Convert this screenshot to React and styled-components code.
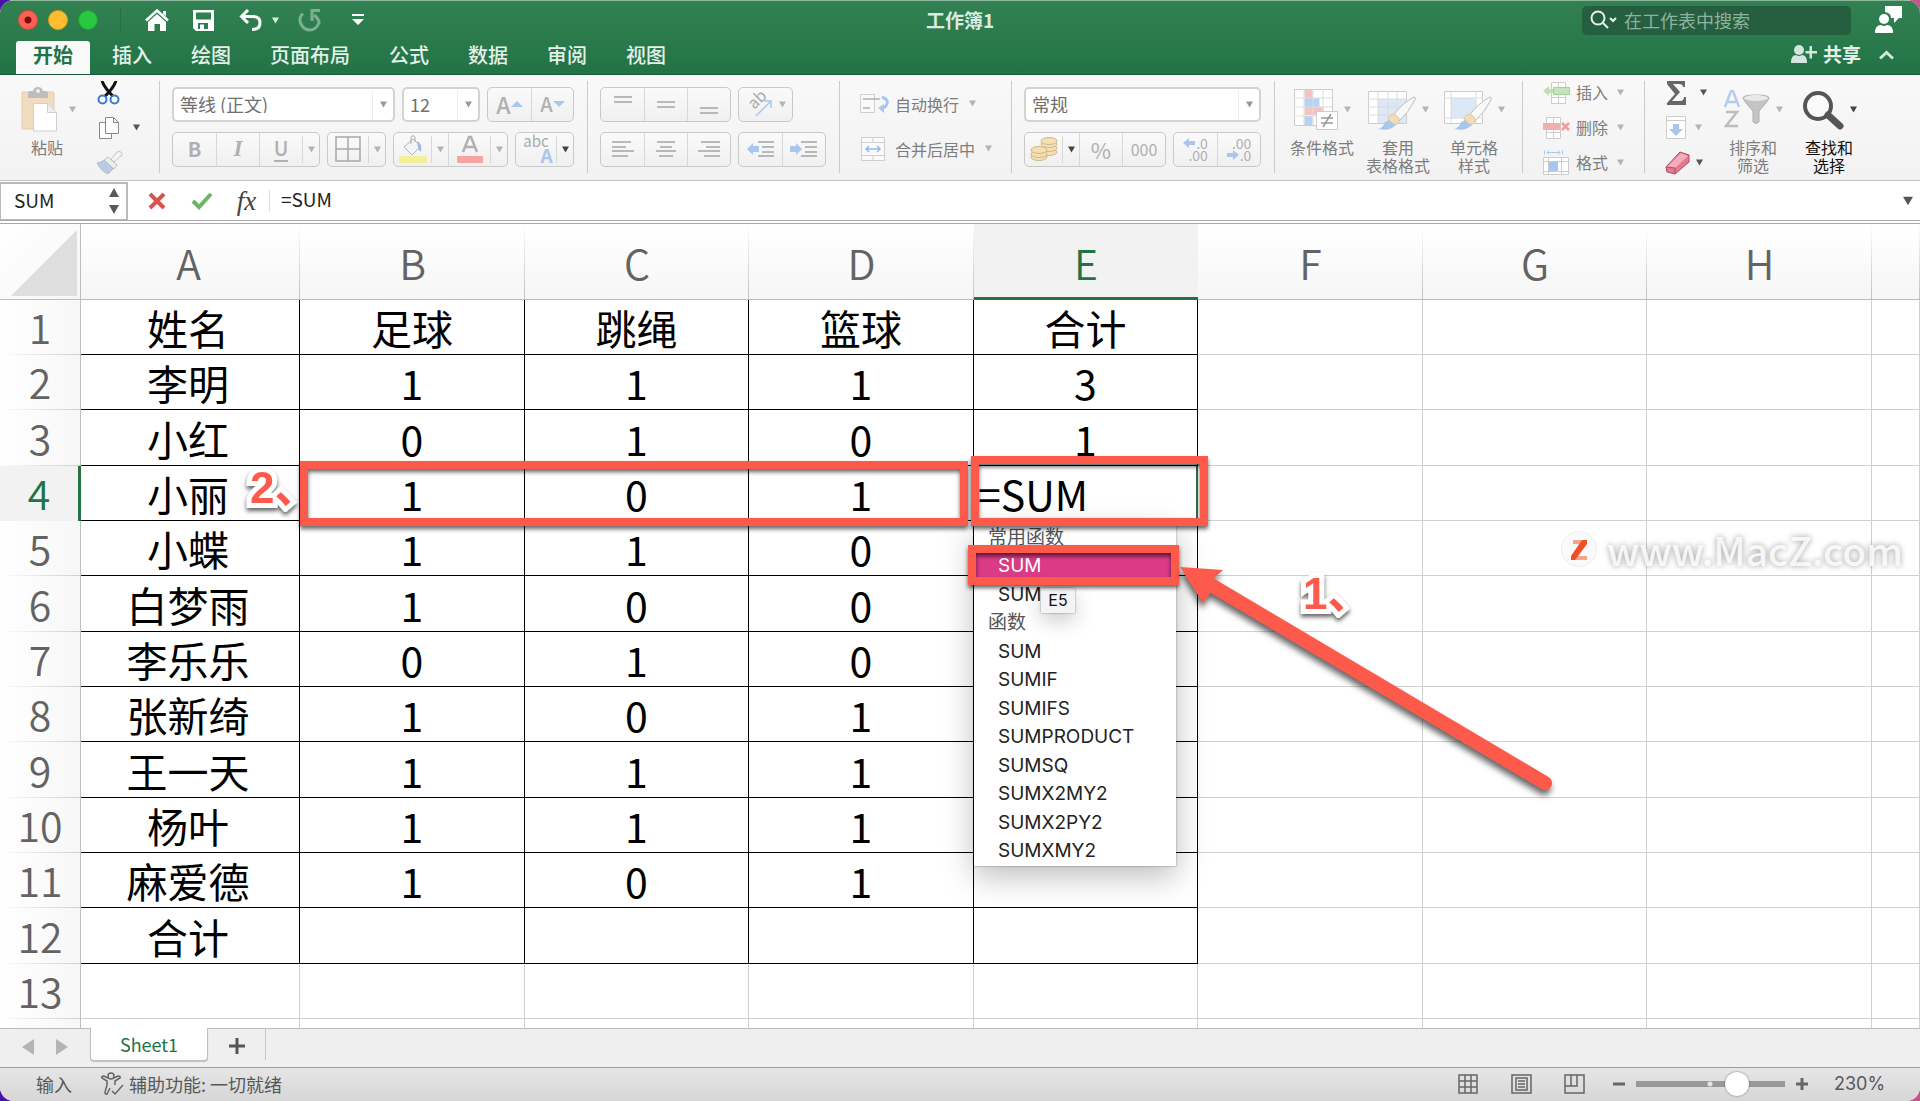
import React from 'react';
import styled, { createGlobalStyle, css } from 'styled-components';

const CJK = '"Noto Sans CJK SC", sans-serif';
const UI = 'Inter, "Noto Sans CJK SC", sans-serif';
const RED = '#fe5a4c';

const GlobalStyle = createGlobalStyle`
  * { box-sizing: border-box; }
  body {
    margin: 0;
    background: linear-gradient(90deg, #4a12a8 0, #4a12a8 50%, #c4558f 50%);
    font-family: ${CJK};
  }
  button, input, select { font-family: inherit; margin: 0; }
  button { padding: 0; border: 0; background: none; color: inherit; }
  svg { display: block; flex: none; }
`;

const Window = styled.div`
  display: flex;
  flex-direction: column;
  height: 100vh;
  border-radius: 14px;
  overflow: hidden;
  background: #fff;
`;

/* ---------- title bar ---------- */

const Header = styled.header`
  background: linear-gradient(#338152, #217346);
  border-top: 1px solid #8bb89c;
  border-bottom: 1px solid #1b5a38;
  color: #e4f0e8;
`;
const TitleRow = styled.div`
  display: flex;
  align-items: center;
  height: 38px;
`;
const Side = styled.div`
  flex: 1;
  display: flex;
  align-items: center;
  justify-content: ${props => props.$end ? 'flex-end' : 'flex-start'};
`;
const Lights = styled.div`
  display: flex;
  gap: 10px;
  padding-left: 18px;
`;
const Light = styled.button`
  width: 20px;
  height: 20px;
  border-radius: 50%;
  border: 1px solid ${props => props.$edge};
  background: ${props => props.$color};
`;
const QuickBar = styled.div`
  display: flex;
  align-items: center;
  height: 24px;
  margin-left: 22px;
  padding-left: 24px;
  border-left: 1px solid #2a6c47;
`;
const QuickButton = styled.button`
  margin-right: ${props => props.$gap}px;
`;
const Title = styled.h1`
  margin: 0;
  font-size: 19px;
  line-height: 24px;
  font-weight: 700;
  color: #dcebe1;
`;
const SearchBox = styled.label`
  display: flex;
  align-items: center;
  width: 269px;
  height: 29px;
  padding-left: 8px;
  border-radius: 5px;
  background: #255f40;
`;
const SearchInput = styled.input`
  flex: 1;
  min-width: 0;
  padding: 0 0 0 6px;
  border: 0;
  background: none;
  font-size: 18px;
  line-height: 26px;
  color: #fff;
  &::placeholder { color: #8fb39e; opacity: 1; }
`;
const UserButton = styled.button`
  margin: 0 18px 0 24px;
`;
const TabRow = styled.nav`
  display: flex;
  align-items: flex-end;
  height: 35px;
  padding-left: 16px;
`;
const TabList = styled.div`
  flex: 1;
  display: flex;
  gap: 5px;
`;
const Tab = styled.button`
  height: 33px;
  padding: 0 17px 5px;
  border-radius: 3px 3px 0 0;
  font-size: 20px;
  line-height: 28px;
  font-weight: 500;
  ${props => props.$active && css`
    background: #f9f9f9;
    color: #217346;
    font-weight: 700;
    margin-bottom: -1px;
  `}
`;
const ShareButton = styled.button`
  display: flex;
  align-items: center;
  gap: 6px;
  height: 33px;
  padding-bottom: 8px;
  font-size: 19px;
  line-height: 25px;
  font-weight: 700;
`;
const CollapseButton = styled.button`
  height: 33px;
  padding: 0 26px 5px 18px;
`;

/* ---------- ribbon ---------- */

const Ribbon = styled.div`
  display: flex;
  height: 106px;
  background: linear-gradient(#f9f9f9, #f2f2f2);
  border-bottom: 1px solid #c4c4c4;
  color: #7d7d7d;
`;
const Group = styled.div`
  display: flex;
  flex: none;
  width: ${props => props.$w}px;
  padding-left: ${props => props.$pad}px;
  background: linear-gradient(#cbcbcb, #cbcbcb) right 6px / 1px 92px no-repeat;
  ${props => props.$last && css`background: none;`}
`;
const Rows = styled.div`
  display: flex;
  flex-direction: column;
  gap: 10px;
  padding-top: 12px;
`;
const ControlRow = styled.div`
  display: flex;
  gap: 7px;
  height: 35px;
`;
const SelectWrap = styled.div`
  display: flex;
  align-items: center;
  width: ${props => props.$w}px;
  padding-right: 6px;
  border: 2px solid #d3d3d3;
  border-radius: 5px;
  background: #fff;
`;
const Select = styled.select`
  flex: 1;
  min-width: 0;
  height: 28px;
  margin-right: 7px;
  padding: 0 0 6px 6px;
  border: 0;
  border-right: 1px solid #ececec;
  appearance: none;
  background: none;
  font-size: 18px;
  color: #6f6f6f;
`;
const Segments = styled.div`
  display: flex;
  border: 1px solid #c9c9c9;
  border-radius: 5px;
  background: linear-gradient(#fafafa, #f0f0f0);
`;
const Segment = styled.button`
  display: flex;
  align-items: center;
  justify-content: center;
  width: ${props => props.$w}px;
  padding-bottom: 1px;
  font-size: ${props => props.$size || 20}px;
  line-height: 24px;
  color: #b0b0b0;
  font-weight: ${props => props.$bold ? 700 : 400};
  & + & { border-left: 1px solid #d8d8d8; }
`;
const DropSegment = styled(Segment)`
  margin: 3px 0;
  border-left: 1px solid #d8d8d8;
`;
const TextButton = styled.button`
  display: flex;
  align-items: center;
  gap: 6px;
  height: 35px;
  padding-bottom: 2px;
  font-size: 16px;
  line-height: 24px;
  & svg:last-child { margin-left: 4px; }
`;
const BigButton = styled.button`
  display: flex;
  flex-direction: column;
  align-items: center;
  width: ${props => props.$w}px;
  padding-top: 8px;
  font-size: 16px;
  line-height: 18px;
  color: ${props => props.$on ? '#111' : '#7d7d7d'};
`;
const IconLine = styled.span`
  display: flex;
  align-items: center;
  gap: 6px;
  height: 51px;
  padding-top: 2px;
  margin-bottom: 4px;
`;
const SmallColumn = styled.div`
  display: flex;
  flex-direction: column;
  ${props => props.$w && css`width: ${props.$w}px;`}
`;
const SmallButton = styled.button`
  display: flex;
  align-items: center;
  gap: ${props => props.$gap || 12}px;
  height: 35px;
  font-size: 16px;
  line-height: 24px;
  & span { padding-bottom: 2px; }
  & span + svg { margin-left: 3px; }
`;

/* ---------- formula bar ---------- */

const FormulaBar = styled.div`
  display: flex;
  align-items: center;
  height: 40px;
  background: #fff;
  border-bottom: 1px solid #a8a8a8;
`;
const NameBox = styled.div`
  display: flex;
  align-items: center;
  width: 128px;
  height: 38px;
  margin-right: 6px;
  border: 1px solid #b9b9b9;
  border-width: 2px 2px 1px 1px;
`;
const BarInput = styled.input`
  flex: 1;
  min-width: 0;
  height: 30px;
  padding: 0 0 4px ${props => props.$pad}px;
  border: 0;
  background: none;
  font-size: 19px;
  color: #222;
`;
const Stepper = styled.button`
  margin-right: 6px;
`;
const BarButton = styled.button`
  display: flex;
  justify-content: center;
  width: 45px;
`;
const BarDivider = styled.span`
  width: 1px;
  height: 22px;
  background: #ddd;
`;
const BarDrop = styled.button`
  margin-right: 7px;
`;
const Fx = styled.i`
  font-family: "Liberation Serif", serif;
  font-size: 27px;
  line-height: 30px;
  color: #444;
`;

/* ---------- sheet ---------- */

const Sheet = styled.main`
  position: relative;
  flex: 1;
  min-height: 0;
  overflow: hidden;
  border-top: 1px solid #a8a8a8;
  margin-top: 2px;
`;
const Table = styled.table`
  width: 100%;
  table-layout: fixed;
  border-collapse: separate;
  border-spacing: 0;
  font-size: 41px;
  line-height: 50px;
  color: #000;
`;
const Col = styled.col`
  width: ${props => props.$w}px;
`;
const ColHead = styled.th`
  height: 76px;
  padding: 0 ${props => props.$first ? 4 : 0}px 0 0;
  font-weight: 350;
  color: #636363;
  background:
    linear-gradient(#fff0, #c4c4c4) right / 1px 100% no-repeat,
    linear-gradient(#fff, #f6f6f6);
  border-bottom: 1px solid #bdbdbd;
  ${props => props.$active && css`
    padding-top: 2px;
    color: #217346;
    background: #f2f2f2;
    border-bottom: 3px solid #217346;
  `}
`;
const Corner = styled.td`
  padding: 6px 0 0 11px;
  vertical-align: top;
  background: linear-gradient(135deg, #fff, #f6f6f6);
  border-right: 1px solid #bdbdbd;
  border-bottom: 1px solid #bdbdbd;
`;
const Row = styled.tr`
  height: 55px;
  &:nth-child(3n) { height: 56px; }
`;
const RowHead = styled.th`
  padding: 0 0 3px;
  font-weight: 350;
  color: #636363;
  background:
    linear-gradient(90deg, #fff0, #d0d0d0) bottom / 100% 1px no-repeat,
    linear-gradient(90deg, #fff, #f7f7f7);
  border-right: 1px solid #bdbdbd;
  ${props => props.$active && css`
    color: #217346;
    background: #f2f2f2;
    border-right: 3px solid #217346;
  `}
`;
const Cell = styled.td`
  padding: 0 ${props => props.$first ? 4 : 0}px 0 0;
  text-align: center;
  white-space: nowrap;
  border-right: 1px solid ${props => props.$ruled ? '#000' : '#d0d0d0'};
  border-bottom: 1px solid ${props => props.$ruled ? '#000' : '#d0d0d0'};
  ${props => props.$editing && css`
    padding-left: 4px;
    text-align: left;
    border-right: 2px solid #2c6b48;
  `}
`;

/* what floats over the cells */

const Menu = styled.ul`
  position: absolute;
  left: 974px;
  top: 300px;
  width: 202px;
  margin: 0;
  padding: 0;
  list-style: none;
  background: #fff;
  box-shadow: 0 0 2px #0006, 0 10px 30px #0004;
`;
const MenuItem = styled.li`
  height: 28px;
  padding-left: 24px;
  font-family: ${UI};
  font-size: 19px;
  line-height: 28px;
  color: #222;
  &:nth-child(2n) { height: 29px; }
  ${props => props.$head && css`
    padding-left: 14px;
    color: #555;
  `}
  ${props => props.$on && css`
    background: #db3a86;
    color: #fff;
  `}
`;
const CellTip = styled.div`
  position: absolute;
  left: 1041px;
  top: 364px;
  width: 34px;
  height: 25px;
  background: #f4f4f4;
  box-shadow: 0 0 2px #0006, 0 8px 20px #0003;
  font-family: ${UI};
  font-size: 16px;
  line-height: 25px;
  text-align: center;
  color: #111;
`;
const Frame = styled.div`
  position: absolute;
  left: ${props => props.$x}px;
  top: ${props => props.$y}px;
  width: ${props => props.$w}px;
  height: ${props => props.$h}px;
  border: 8px solid ${RED};
  filter: drop-shadow(0 3px 2px #0009);
`;
const Arrow = styled.svg`
  position: absolute;
  left: 1170px;
  top: 330px;
  filter: drop-shadow(-1px 5px 3px #0009);
`;
const Mark = styled.div`
  position: absolute;
  left: ${props => props.$x}px;
  top: ${props => props.$y}px;
  font-family: "Liberation Sans", "Noto Sans CJK SC", sans-serif;
  font-size: 44px;
  line-height: 50px;
  font-weight: 700;
  color: ${RED};
  -webkit-text-stroke: 10px #fff;
  paint-order: stroke fill;
  stroke-linejoin: round;
  filter: drop-shadow(0 3px 2px #0009);
`;
const Watermark = styled.div`
  position: absolute;
  right: 17px;
  top: 300px;
  display: flex;
  align-items: center;
  gap: 10px;
  font-size: 39px;
  line-height: 50px;
  font-weight: 500;
  color: #fffd;
  text-shadow: 0 0 6px #0006;
`;

/* ---------- bottom bars ---------- */

const SheetTabs = styled.div`
  display: flex;
  align-items: flex-start;
  height: 40px;
  padding-left: 22px;
  background: #efefef;
  border-top: 1px solid #bdbdbd;
  border-bottom: 1px solid #9c9c9c;
`;
const NavButton = styled.button`
  width: 34px;
  height: 35px;
`;
const SheetTab = styled.button`
  width: 118px;
  height: 33px;
  margin-top: -1px;
  border: 1px solid #c0c0c0;
  border-top: 0;
  border-radius: 0 0 4px 4px;
  background: #fff;
  box-shadow: 0 1px 1px #0003;
  font-size: 18px;
  line-height: 30px;
  color: #217346;
`;
const AddTab = styled.button`
  display: flex;
  align-items: center;
  justify-content: center;
  width: 58px;
  height: 31px;
  padding-top: 3px;
  border-right: 1px solid #c8c8c8;
`;
const StatusBar = styled.footer`
  display: flex;
  align-items: center;
  height: 33px;
  padding: 0 36px 2px;
  background: linear-gradient(#e6e6e6, #d6d6d6);
  font-size: 18px;
  line-height: 26px;
  color: #585858;
`;
const StatusText = styled.span`
  flex: 1;
  display: flex;
  align-items: center;
  gap: 4px;
  padding-left: 29px;
`;
const ViewButton = styled.button`
  margin-right: ${props => props.$gap}px;
`;
const Zoom = styled.input`
  appearance: none;
  width: 149px;
  height: 24px;
  margin: 0 11px;
  background:
    radial-gradient(circle at 74px 12px, #e4e4e4 2px, #fff0 3px),
    linear-gradient(#999, #999) center / 100% 6px no-repeat;
  &::-webkit-slider-thumb {
    appearance: none;
    width: 24px;
    height: 24px;
    border-radius: 50%;
    background: #fff;
    box-shadow: 0 0 2px #0008;
  }
`;
const ZoomValue = styled.span`
  width: 76px;
  padding-left: 26px;
  font-family: ${UI};
`;

/* ---------- icons ---------- */

const Caret = ({ color = '#b4b4b4', size = 7 }) => (
  <svg width={size} height={size} viewBox="0 0 7 7"><path d="M0 .5h7L3.500 6.500z" fill={color} /></svg>
);

const PasteIcon = () => (
  <svg width="44" height="46" viewBox="0 0 44 46">
    <rect x="3" y="5" width="32" height="37" rx="1" fill="#f1dcc0" stroke="#e3cdb0" />
    <path d="M9 11V6q0-2 3-2h2q1-4 5-4t5 4h2q3 0 3 2v5z" fill="#bdbdbd" />
    <circle cx="19" cy="4" r="2" fill="#f1f1f1" />
    <path d="M14.500 16.500h14l9 9v18.500h-23z" fill="#fff" stroke="#cfcfcf" />
    <path d="M28.500 16.500v9h9" fill="#eee" stroke="#cfcfcf" />
  </svg>
);
const CutIcon = () => (
  <svg width="24" height="24" viewBox="0 0 24 24" fill="none">
    <path d="M5 0q3 8 13 17M19 0q-3 8-13 17" stroke="#111" strokeWidth="3" />
    <circle cx="5.500" cy="18.500" r="4" stroke="#3a7bc8" strokeWidth="2" fill="#fff" />
    <circle cx="17.500" cy="18.500" r="4" stroke="#3a7bc8" strokeWidth="2" fill="#fff" />
  </svg>
);
const CopyIcon = () => (
  <svg width="24" height="24" viewBox="0 0 24 24" fill="#fff" stroke="#888">
    <path d="M2.500 6.500h12v16h-12z" />
    <path d="M8.500 1.500h8l5 5v11h-13zM16.500 1.500v5h5" />
  </svg>
);
const BrushIcon = () => (
  <svg width="28" height="24" viewBox="0 0 28 24">
    <path d="M14 8l6-7q2-1 4 0t0 4l-7 6z" fill="#f4f4f4" stroke="#c4c4c4" />
    <path d="M11 6l9 8-3 4L7 9z" fill="#eee" stroke="#c0c0c0" />
    <path d="M7 9l9 9-5 5Q4 20 0 12q4 0 7-3z" fill="#bccbe2" stroke="#aebdd2" />
  </svg>
);
const GridIcon = () => (
  <svg width="26" height="26" viewBox="0 0 26 26" fill="none" stroke="#a8a8a8" strokeWidth="1.500">
    <path d="M1 1h24v24H1zM13 1v24M1 13h24" />
  </svg>
);
const FillIcon = () => (
  <svg width="28" height="30" viewBox="0 0 28 30">
    <path d="M5 13l9-8 8 7-9 9z" fill="#f2f4f8" stroke="#a9b7c9" />
    <path d="M12 10V3q2-3 4 0v5" fill="none" stroke="#aaa" />
    <path d="M18 7q6 3 4 11-3-2-3-5z" fill="#9fbbe4" />
    <rect x="0" y="22" width="28" height="7" rx="1" fill="#f4f09a" />
  </svg>
);
const FontColorIcon = () => (
  <svg width="28" height="30" viewBox="0 0 28 30">
    <path d="M7 18L13 3h2l6 15M9.500 13h9" fill="none" stroke="#b0b0b0" strokeWidth="2.500" />
    <rect x="1" y="22" width="26" height="7" rx="1" fill="#f9a3a0" />
  </svg>
);
const Phonetic = styled.span`
  display: flex;
  flex-direction: column;
  align-items: flex-end;
  font-size: 15px;
  line-height: 12px;
  color: #aaa;
  & b { font-size: 19px; line-height: 16px; color: #a9c6ef; margin-right: -4px; }
`;
const Letter = styled.span`
  font-size: ${props => props.$size}px;
  line-height: 28px;
  font-weight: 500;
`;
const Italic = styled.i`
  font-family: "Liberation Serif", serif;
  font-size: 23px;
  font-weight: 700;
`;
const Under = styled.span`
  height: 26px;
  border-bottom: 2px solid #b0b0b0;
  line-height: 23px;
  font-weight: 500;
`;
const Tri = ({ up }) => (
  <svg width="12" height="6" viewBox="0 0 12 6"><path d={up ? 'M0 6h12L6 0z' : 'M0 0h12L6 6z'} fill="#a9c6ef" /></svg>
);
// bars: [left, right, y] of each line inside a 24x20 box
const Lines = ({ bars }) => (
  <svg width="24" height="20" viewBox="0 0 24 20" stroke="#a4a4a4" strokeWidth="1.500">
    {bars.map(([a, b, y]) => <path key={y} d={`M${a} ${y}H${b}`} />)}
  </svg>
);
const OrientIcon = () => (
  <svg width="30" height="32" viewBox="0 0 30 32">
    <text x="8" y="21" transform="rotate(-45 10 20)" fontSize="16" fill="#aaa">ab</text>
    <path d="M11 28L26 13M19 13h7v7" fill="none" stroke="#a9c6ef" strokeWidth="1.500" />
  </svg>
);
const IndentIcon = ({ right }) => (
  <svg width="28" height="18" viewBox="0 0 28 18">
    <path d={right ? 'M12 9L6 3v3H0v6h6v3z' : 'M0 9l6-6v3h6v6H6v3z'} fill="#a9c6ef" />
    <path d="M11 2h16M15 7h12M15 12h12M11 16h16" stroke="#a4a4a4" strokeWidth="1.500" />
  </svg>
);
const WrapIcon = () => (
  <svg width="29" height="20" viewBox="0 0 29 20" fill="none">
    <path d="M.5.500h14v18H.5z" fill="#fafafa" stroke="#cfcfcf" />
    <path d="M3 5h17M3 14h7" stroke="#b0b0b0" strokeWidth="1.500" />
    <path d="M22 3q8 3 4 9-1 1-3 2" stroke="#a9c6ef" strokeWidth="3" />
    <path d="M18 14l6-4v9z" fill="#a9c6ef" />
  </svg>
);
const MergeIcon = () => (
  <svg width="29" height="24" viewBox="0 0 29 24" fill="none">
    <path d="M1.500.500h23v23h-23zM1.500 5.500h23M1.500 18.500h23M13 .5v5M13 18.500v5" fill="#fafafa" stroke="#cfcfcf" />
    <path d="M6 12h14M9 9l-3 3 3 3M17 9l3 3-3 3" stroke="#94b8ea" strokeWidth="1.500" />
  </svg>
);
const CoinsIcon = () => (
  <svg width="28" height="24" viewBox="0 0 28 24" stroke="#cdb78d" fill="#f6e0b0">
    {[15, 11, 7, 4].map(y => <ellipse key={y} cx="19" cy={y} rx="8" ry="3.500" />)}
    {[20, 17, 13].map(y => <ellipse key={y} cx="9" cy={y} rx="8" ry="3.500" />)}
  </svg>
);
const Decimals = styled.span`
  display: flex;
  flex-direction: column;
  align-items: flex-end;
  font-size: 14px;
  line-height: 12px;
  & span { display: flex; align-items: center; gap: 1px; }
`;
const SmallArrow = ({ right }) => (
  <svg width="12" height="10" viewBox="0 0 12 10">
    <path d={right ? 'M12 5L6 0v3H0v4h6v3z' : 'M0 5l6-5v3h6v4H6v3z'} fill="#a9c6ef" />
  </svg>
);
const ConditionIcon = () => (
  <svg width="44" height="42" viewBox="0 0 44 42">
    <path d="M.5.500h38v36H.5z" fill="#fff" stroke="#ccc" />
    <path d="M10.500 1h8v8h-8zM10.500 18h19v8h-19z" fill="#f6c3c3" />
    <path d="M10.500 9h15v9h-15zM10.500 27h8v9h-8z" fill="#b7d3f4" />
    <path d="M10 0v36M19 0v36M29 0v36M0 9h38M0 18h38M0 27h38" stroke="#ddd" fill="none" />
    <path d="M22.500 22.500h21v18h-21z" fill="#fff" stroke="#ccc" />
    <path d="M27 29h12M27 34h12M37 25l-8 13" stroke="#999" strokeWidth="1.500" />
  </svg>
);
const TableBrush = ({ cell }) => (
  <svg width="48" height="42" viewBox="0 0 48 42">
    <path d="M.5 2.500h38v32H.5z" fill="#fff" stroke="#ccc" />
    <path d={cell ? 'M7 9h25v20H7z' : 'M10 10h28v24H10z'} fill="#dce8f6" />
    <path
      d={cell ? 'M7 2v32M32 2v32M0 9h38M0 29h38' : 'M10 2v32M20 2v32M29 2v32M0 10h38M0 18h38M0 26h38'}
      stroke="#dadada" fill="none"
    />
    <path d="M24 28Q34 14 46 8q2 0 1 3-6 12-17 22z" fill="#f8f8f8" stroke="#bdbdbd" />
    <path d="M20 30q2-6 7-4t4 7q-4 5-8 4z" fill="#f4dcb4" stroke="#dcc8a4" />
    <path d="M10 40q5-1 7-7l5-2q2 4 6 4-5 8-18 5z" fill="#a9c6ef" />
  </svg>
);
const InsertIcon = () => (
  <svg width="27" height="24" viewBox="0 0 27 24">
    <path d="M8.500 1.500h14v21h-14zM15.500 1.500v21M8.500 16.500h14" fill="#fff" stroke="#ccc" />
    <path d="M0 10l6-5v3h4v4H6v3z" fill="#bfe0b5" />
    <path d="M10.500 6.500h16v7h-16z" fill="#c4e4bb" stroke="#a9cf9e" />
  </svg>
);
const DeleteIcon = () => (
  <svg width="27" height="24" viewBox="0 0 27 24">
    <path d="M3.500 1.500h14v21h-14zM10.500 1.500v21M3.500 16.500h14" fill="#fff" stroke="#ccc" />
    <path d="M0 7h17v7H0z" fill="#f3aeae" />
    <path d="M19 7l7 7M26 7l-7 7" stroke="#ee9c9c" strokeWidth="2.500" />
  </svg>
);
const FormatIcon = () => (
  <svg width="27" height="26" viewBox="0 0 27 26">
    <path d="M1.500.500v4M19.500.500v4M4 2.500h13M6 .5l-2 2 2 2M15 .5l2 2-2 2" stroke="#a9c6ef" fill="none" />
    <path d="M.5 7.500h25v17H.5zM.5 11.500h25M5.500 7.500v17M18.500 7.500v17M.5 21.500h25" fill="#fff" stroke="#ccc" />
    <path d="M6 12h9v9H6z" fill="#a9c6ef" />
  </svg>
);
const SigmaIcon = () => (
  <svg width="23" height="24" viewBox="0 0 23 24">
    <path d="M2 0h18v6h-2q0-3-4-3H8l7 8-8 9h8q4 0 4-4h2v8H2v-2l8-9-8-10z" fill="#666" />
  </svg>
);
const FillDownIcon = () => (
  <svg width="22" height="24" viewBox="0 0 22 24">
    <path d="M1.500.500h19v22h-19zM1.500 4.500h19" fill="#fff" stroke="#ccc" />
    <path d="M8 8h6v5h4l-7 7-7-7h4z" fill="#a9c6ef" />
  </svg>
);
const EraserIcon = () => (
  <svg width="25" height="26" viewBox="0 0 25 26">
    <path d="M1 17L15 2l9 3v7L10 24l-8-2z" fill="#e4788f" stroke="#b34a63" strokeLinejoin="round" />
    <path d="M2 17l14-14 7 3-13 12z" fill="#f3acbb" />
    <path d="M10 18v6M10 18L1 17" stroke="#b34a63" />
  </svg>
);
const SortIcon = () => (
  <svg width="46" height="40" viewBox="0 0 46 40">
    <path d="M1 17L7 1h2l6 16M3.500 12h9" stroke="#b3ccf0" strokeWidth="2.500" fill="none" />
    <path d="M2 22h11L2 36h12" stroke="#bdbdbd" strokeWidth="2.500" fill="none" />
    <path d="M19 8q0-3 13-3t13 3q0 2-10 13v11q-3 3-6 0V21Q19 10 19 8z" fill="#c4c4c4" stroke="#b0b0b0" />
    <ellipse cx="32" cy="8" rx="12" ry="3" fill="#e9e9e9" />
  </svg>
);
const FindIcon = () => (
  <svg width="42" height="40" viewBox="0 0 42 40" fill="none">
    <circle cx="16" cy="16" r="13" stroke="#555" strokeWidth="4" fill="#fafafa" />
    <path d="M26 25l12 11" stroke="#555" strokeWidth="7" strokeLinecap="round" />
  </svg>
);
const HomeIcon = () => (
  <svg width="24" height="23" viewBox="0 0 24 23">
    <path d="M1 11.500L12 1.500l11 10" stroke="#fff" strokeWidth="2.500" fill="none" />
    <path d="M3 13l9-8 9 8v9h-6v-7H9.500v7H3zM18 2h3v5l-3-2z" fill="#fff" />
  </svg>
);
const SaveIcon = () => (
  <svg width="21" height="21" viewBox="0 0 21 21">
    <path fillRule="evenodd" d="M0 0h21v21H3l-3-3zM3 2.500v7h15v-7zM5 13v6h2v-4.500h4V19h4v-6z" fill="#fff" />
  </svg>
);
const UndoIcon = () => (
  <svg width="24" height="22" viewBox="0 0 24 22" fill="none" stroke="#fff" strokeWidth="3">
    <path d="M9 1L2.500 7.500 9 14M3 7.500h11q7 0 7 6.500t-8 6.500" />
  </svg>
);
const RedoIcon = () => (
  <svg width="24" height="23" viewBox="0 0 24 23" fill="none" stroke="#7cb091" strokeWidth="3">
    <path d="M5 4.500Q0 9 3 15t9 6 9-7q0-4-5-8M12.500 1.500H22M14 12V2" />
  </svg>
);
const CustomizeIcon = () => (
  <svg width="12" height="12" viewBox="0 0 12 12"><path d="M0 0h12v2H0zM0 5h12l-6 6z" fill="#fff" /></svg>
);
const SearchIcon = () => (
  <svg width="28" height="20" viewBox="0 0 28 20" fill="none" stroke="#e6f0ea" strokeWidth="2">
    <circle cx="8" cy="8" r="6.500" /><path d="M13 13l5 5M20 8l3 3 3-3" />
  </svg>
);
const UserIcon = () => (
  <svg width="27" height="28" viewBox="0 0 27 28" fill="#fff">
    <path d="M10 0h17v12h-3l-5 5v-5h-3q0-5-6-6z" />
    <circle cx="9" cy="13" r="5" />
    <path d="M0 27q0-8 6-8 3 2 6 0 6 0 6 8z" />
  </svg>
);
const ShareIcon = () => (
  <svg width="26" height="20" viewBox="0 0 26 20" fill="#d5e6dc">
    <circle cx="8" cy="6" r="5" />
    <path d="M0 19q0-8 5-8 3 2 6 0 5 0 5 8z" />
    <path d="M18.500 2h2.500v5h5v2.500h-5v5h-2.500v-5h-4V7h4z" />
  </svg>
);
const AccessIcon = () => (
  <svg width="24" height="24" viewBox="0 0 24 24" fill="none" stroke="#666" strokeWidth="1.500">
    <circle cx="10" cy="4" r="3" />
    <path d="M7 6L3 4Q0 4 1 6l5 3v4L4 20q0 3 2 2l3-6M13 6l4-2q3 0 2 2l-5 3v4M11 19l3 3 8-9" />
  </svg>
);

/* ---------- data ---------- */

const TABS = ['开始', '插入', '绘图', '页面布局', '公式', '数据', '审阅', '视图'];
const COLUMNS = ['A', 'B', 'C', 'D', 'E', 'F', 'G', 'H', ''];
const WIDTHS = [81, 219, 225, 224, 225, 224, 225, 224, 225];
const DATA = [
  ['姓名', '足球', '跳绳', '篮球', '合计'],
  ['李明', 1, 1, 1, 3],
  ['小红', 0, 1, 0, 1],
  ['小丽', 1, 0, 1, '=SUM'],
  ['小蝶', 1, 1, 0, ''],
  ['白梦雨', 1, 0, 0, ''],
  ['李乐乐', 0, 1, 0, ''],
  ['张新绮', 1, 0, 1, ''],
  ['王一天', 1, 1, 1, ''],
  ['杨叶', 1, 1, 1, ''],
  ['麻爱德', 1, 0, 1, ''],
  ['合计', '', '', '', ''],
  [],
  [],
];
const FUNCTIONS = [
  { text: '常用函数', head: true },
  { text: 'SUM', on: true },
  { text: 'SUM' },
  { text: '函数', head: true },
  ...['SUM', 'SUMIF', 'SUMIFS', 'SUMPRODUCT', 'SUMSQ', 'SUMX2MY2', 'SUMX2PY2', 'SUMXMY2'].map(text => ({ text })),
];

const Drop = ({ label, dark }) => (
  <DropSegment aria-label={label} $w={17}><Caret color={dark ? '#444' : undefined} /></DropSegment>
);

const TitleBar = () => (
  <Header>
    <TitleRow>
      <Side>
        <Lights>
          <Light aria-label="关闭" $edge="#d9483f" $color="radial-gradient(circle, #7d0b08 3px, #fe5f57 4px)" />
          <Light aria-label="最小化" $edge="#d89b26" $color="#febc2e" />
          <Light aria-label="缩放" $edge="#1ea32f" $color="#28c840" />
        </Lights>
        <QuickBar>
          <QuickButton aria-label="主页" $gap={24}><HomeIcon /></QuickButton>
          <QuickButton aria-label="保存" $gap={25}><SaveIcon /></QuickButton>
          <QuickButton aria-label="撤消" $gap={9}><UndoIcon /></QuickButton>
          <QuickButton aria-label="撤消列表" $gap={19}><Caret color="#dcebe1" /></QuickButton>
          <QuickButton aria-label="重做" $gap={30}><RedoIcon /></QuickButton>
          <QuickButton aria-label="自定义" $gap={0}><CustomizeIcon /></QuickButton>
        </QuickBar>
      </Side>
      <Title>工作簿1</Title>
      <Side $end>
        <SearchBox>
          <SearchIcon />
          <SearchInput aria-label="搜索" placeholder="在工作表中搜索" />
        </SearchBox>
        <UserButton aria-label="用户"><UserIcon /></UserButton>
      </Side>
    </TitleRow>
    <TabRow>
      <TabList>
        {TABS.map((t, i) => <Tab key={t} $active={i === 0}>{t}</Tab>)}
      </TabList>
      <ShareButton><ShareIcon />共享</ShareButton>
      <CollapseButton aria-label="折叠功能区">
        <svg width="15" height="10" viewBox="0 0 15 10"><path d="M1 8.500l6.500-6 6.500 6" fill="none" stroke="#d5e6dc" strokeWidth="3" /></svg>
      </CollapseButton>
    </TabRow>
  </Header>
);

const Dropdown = ({ label, value, w }) => (
  <SelectWrap $w={w}>
    <Select aria-label={label} defaultValue={value}><option>{value}</option></Select>
    <Caret color="#999" />
  </SelectWrap>
);

const Big = ({ w, icon, lines, on }) => (
  <BigButton $w={w} $on={on}>
    <IconLine>{icon}<Caret color={on ? '#444' : undefined} /></IconLine>
    {lines.map(l => <span key={l}>{l}</span>)}
  </BigButton>
);

const RibbonBar = () => (
  <Ribbon>
    <Group $w={160} $pad={12}>
      <Big w={70} icon={<PasteIcon />} lines={['粘贴']} />
      <SmallColumn>
        <SmallButton aria-label="剪切"><span /><CutIcon /></SmallButton>
        <SmallButton aria-label="复制"><span /><CopyIcon /><Caret color="#555" /></SmallButton>
        <SmallButton aria-label="格式刷"><span /><BrushIcon /></SmallButton>
      </SmallColumn>
    </Group>

    <Group $w={428} $pad={12}>
      <Rows>
        <ControlRow>
          <Dropdown label="字体" value="等线 (正文)" w={223} />
          <Dropdown label="字号" value="12" w={78} />
          <Segments>
            <Segment aria-label="增大字号" $w={43}><Letter $size={23}>A</Letter><Tri up /></Segment>
            <Segment aria-label="减小字号" $w={42}><Letter $size={20}>A</Letter><Tri /></Segment>
          </Segments>
        </ControlRow>
        <ControlRow>
          <Segments>
            <Segment $w={43} $bold>B</Segment>
            <Segment $w={43}><Italic>I</Italic></Segment>
            <Segment $w={43}><Under>U</Under></Segment>
            <Drop label="下划线选项" />
          </Segments>
          <Segments>
            <Segment aria-label="边框" $w={40}><GridIcon /></Segment>
            <Drop label="边框选项" />
          </Segments>
          <Segments>
            <Segment aria-label="填充颜色" $w={37}><FillIcon /></Segment>
            <Drop label="填充颜色选项" />
            <Segment aria-label="字体颜色" $w={42}><FontColorIcon /></Segment>
            <Drop label="字体颜色选项" />
          </Segments>
          <Segments>
            <Segment $w={40}><Phonetic>abc<b>A</b></Phonetic></Segment>
            <Drop label="拼音选项" dark />
          </Segments>
        </ControlRow>
      </Rows>
    </Group>

    <Group $w={252} $pad={12}>
      <Rows>
        <ControlRow>
          <Segments>
            <Segment aria-label="顶端对齐" $w={43}><Lines bars={[[3, 21, 3], [3, 21, 8]]} /></Segment>
            <Segment aria-label="垂直居中" $w={43}><Lines bars={[[3, 21, 8], [3, 21, 13]]} /></Segment>
            <Segment aria-label="底端对齐" $w={43}><Lines bars={[[3, 21, 14], [3, 21, 19]]} /></Segment>
          </Segments>
          <Segments>
            <Segment aria-label="方向" $w={53}><OrientIcon />&nbsp;<Caret /></Segment>
          </Segments>
        </ControlRow>
        <ControlRow>
          <Segments>
            <Segment aria-label="左对齐" $w={43}><Lines bars={[[1, 20, 3], [1, 15, 8], [1, 23, 12], [1, 17, 17]]} /></Segment>
            <Segment aria-label="居中" $w={43}><Lines bars={[[3, 21, 3], [6, 18, 8], [2, 22, 12], [5, 19, 17]]} /></Segment>
            <Segment aria-label="右对齐" $w={43}><Lines bars={[[4, 23, 3], [9, 23, 8], [1, 23, 12], [7, 23, 17]]} /></Segment>
          </Segments>
          <Segments>
            <Segment aria-label="减少缩进" $w={43}><IndentIcon /></Segment>
            <Segment aria-label="增加缩进" $w={43}><IndentIcon right /></Segment>
          </Segments>
        </ControlRow>
      </Rows>
    </Group>

    <Group $w={172} $pad={20}>
      <Rows>
        <TextButton><WrapIcon />自动换行<Caret /></TextButton>
        <TextButton><MergeIcon />合并后居中<Caret /></TextButton>
      </Rows>
    </Group>

    <Group $w={263} $pad={12}>
      <Rows>
        <ControlRow><Dropdown label="数字格式" value="常规" w={237} /></ControlRow>
        <ControlRow>
          <Segments>
            <Segment aria-label="货币" $w={37}><CoinsIcon /></Segment>
            <Drop label="货币选项" dark />
            <Segment $w={43} $size={22}>%</Segment>
            <Segment $w={43} $size={16}>000</Segment>
          </Segments>
          <Segments>
            <Segment $w={43}><Decimals><span><SmallArrow />.0</span><span>.00</span></Decimals></Segment>
            <Segment $w={43}><Decimals><span>.00</span><span><SmallArrow right />.0</span></Decimals></Segment>
          </Segments>
        </ControlRow>
      </Rows>
    </Group>

    <Group $w={248} $pad={9}>
      <Big w={76} icon={<ConditionIcon />} lines={['条件格式']} />
      <Big w={76} icon={<TableBrush />} lines={['套用', '表格格式']} />
      <Big w={76} icon={<TableBrush cell />} lines={['单元格', '样式']} />
    </Group>

    <Group $w={122} $pad={20}>
      <SmallColumn>
        <SmallButton $gap={6}><InsertIcon /><span>插入</span><Caret /></SmallButton>
        <SmallButton $gap={6}><DeleteIcon /><span>删除</span><Caret /></SmallButton>
        <SmallButton $gap={6}><FormatIcon /><span>格式</span><Caret /></SmallButton>
      </SmallColumn>
    </Group>

    <Group $w={240} $pad={20} $last>
      <SmallColumn $w={50}>
        <SmallButton aria-label="自动求和"><SigmaIcon /><Caret color="#555" /></SmallButton>
        <SmallButton aria-label="填充" $gap={8}><FillDownIcon /><Caret /></SmallButton>
        <SmallButton aria-label="清除" $gap={6}><EraserIcon /><Caret color="#555" /></SmallButton>
      </SmallColumn>
      <Big w={76} icon={<SortIcon />} lines={['排序和', '筛选']} />
      <Big w={76} icon={<FindIcon />} lines={['查找和', '选择']} on />
    </Group>
  </Ribbon>
);

const Formula = () => (
  <FormulaBar>
    <NameBox>
      <BarInput aria-label="名称框" defaultValue="SUM" $pad={13} />
      <Stepper aria-label="名称列表">
        <svg width="12" height="26" viewBox="0 0 12 26" fill="#5a5a5a"><path d="M1 9h10L6 0zM1 17h10l-5 9z" /></svg>
      </Stepper>
    </NameBox>
    <BarButton aria-label="取消">
      <svg width="18" height="18" viewBox="0 0 18 18"><path d="M2 2l14 14M16 2L2 16" stroke="#d9534f" strokeWidth="4" /></svg>
    </BarButton>
    <BarButton aria-label="输入">
      <svg width="22" height="18" viewBox="0 0 22 18"><path d="M2 9l6 6L20 2" stroke="#6ab665" strokeWidth="4" fill="none" /></svg>
    </BarButton>
    <BarButton aria-label="插入函数"><Fx>fx</Fx></BarButton>
    <BarDivider />
    <BarInput aria-label="编辑栏" defaultValue="=SUM" $pad={11} />
    <BarDrop aria-label="展开编辑栏"><Caret color="#555" size={10} /></BarDrop>
  </FormulaBar>
);

const SheetGrid = () => (
  <Table>
    <colgroup>
      {WIDTHS.map((w, i) => <Col key={i} $w={w} />)}
      <col />
    </colgroup>
    <thead>
      <tr>
        <Corner>
          <svg width="66" height="66" viewBox="0 0 66 66"><path d="M66 0v66H0z" fill="#dedede" /></svg>
        </Corner>
        {COLUMNS.map((c, i) => <ColHead key={i} $first={i === 0} $active={c === 'E'}>{c}</ColHead>)}
      </tr>
    </thead>
    <tbody>
      {DATA.map((row, r) => (
        <Row key={r}>
          <RowHead $active={r === 3}>{r < 13 ? r + 1 : ''}</RowHead>
          {COLUMNS.map((c, i) => (
            <Cell key={i} $first={i === 0} $ruled={i < 5 && r < 12} $editing={i === 4 && r === 3}>{row[i]}</Cell>
          ))}
        </Row>
      ))}
    </tbody>
  </Table>
);

const Annotations = () => (
  <>
    <Menu>
      {FUNCTIONS.map((f, i) => <MenuItem key={i} $head={f.head} $on={f.on}>{f.text}</MenuItem>)}
    </Menu>
    <CellTip>E5</CellTip>
    <Frame $x={300} $y={237} $w={668} $h={65} />
    <Frame $x={971} $y={232} $w={237} $h={70} />
    <Frame $x={968} $y={321} $w={211} $h={40} />
    <Arrow width="390" height="250" viewBox="0 0 390 250">
      <path d="M10 13L53 16 44 24 41 38 33 49z" fill={RED} />
      <path d="M36 28L375 229" stroke={RED} strokeWidth="14" strokeLinecap="round" />
    </Arrow>
    <Mark $x={250} $y={239}>2、</Mark>
    <Mark $x={1303} $y={345}>1、</Mark>
    <Watermark>
      <svg width="36" height="36" viewBox="0 0 36 36">
        <circle cx="18" cy="18" r="17.500" fill="#fafafa" stroke="#ececec" />
        <path d="M12 9h14v4H12zM12 25h14v4H12z" fill="#f7a58f" />
        <path d="M21 9h5v4L14 29h-4v-4z" fill="#f04e23" />
      </svg>
      www.MacZ.com
    </Watermark>
  </>
);

const Footer = () => (
  <>
    <SheetTabs>
      <NavButton aria-label="上一张"><svg width="12" height="16" viewBox="0 0 12 16"><path d="M12 0v16L0 8z" fill="#b4b4b4" /></svg></NavButton>
      <NavButton aria-label="下一张"><svg width="12" height="16" viewBox="0 0 12 16"><path d="M0 0v16l12-8z" fill="#b4b4b4" /></svg></NavButton>
      <SheetTab>Sheet1</SheetTab>
      <AddTab aria-label="新工作表">
        <svg width="16" height="16" viewBox="0 0 16 16"><path d="M8 0v16M0 8h16" stroke="#555" strokeWidth="3" /></svg>
      </AddTab>
    </SheetTabs>
    <StatusBar>
      <span>输入</span>
      <StatusText><AccessIcon />辅助功能: 一切就绪</StatusText>
      <ViewButton aria-label="普通" $gap={33}>
        <svg width="20" height="20" viewBox="0 0 20 20" fill="none" stroke="#666" strokeWidth="1.500"><path d="M1 1h18v18H1zM7 1v18M13 1v18M1 7h18M1 13h18" /></svg>
      </ViewButton>
      <ViewButton aria-label="页面布局" $gap={32}>
        <svg width="21" height="20" viewBox="0 0 21 20" fill="none" stroke="#666" strokeWidth="1.500"><path d="M1 1h19v18H1zM5 4h11v12H5zM7 7h7M7 10h7M7 13h7" /></svg>
      </ViewButton>
      <ViewButton aria-label="分页预览" $gap={28}>
        <svg width="21" height="20" viewBox="0 0 21 20" fill="none" stroke="#666" strokeWidth="1.500"><path d="M1 1h19v18H1zM1 12h12V1M7 1v11" /></svg>
      </ViewButton>
      <button aria-label="缩小"><svg width="12" height="12" viewBox="0 0 12 12"><path d="M0 6h12" stroke="#666" strokeWidth="3" /></svg></button>
      <Zoom type="range" aria-label="缩放比例" min="0" max="100" defaultValue="71" />
      <button aria-label="放大"><svg width="12" height="12" viewBox="0 0 12 12"><path d="M0 6h12M6 0v12" stroke="#666" strokeWidth="3" /></svg></button>
      <ZoomValue>230%</ZoomValue>
    </StatusBar>
  </>
);

export default function App() {
  return (
    <>
      <GlobalStyle />
      <Window>
        <TitleBar />
        <RibbonBar />
        <Formula />
        <Sheet>
          <SheetGrid />
          <Annotations />
        </Sheet>
        <Footer />
      </Window>
    </>
  );
}
